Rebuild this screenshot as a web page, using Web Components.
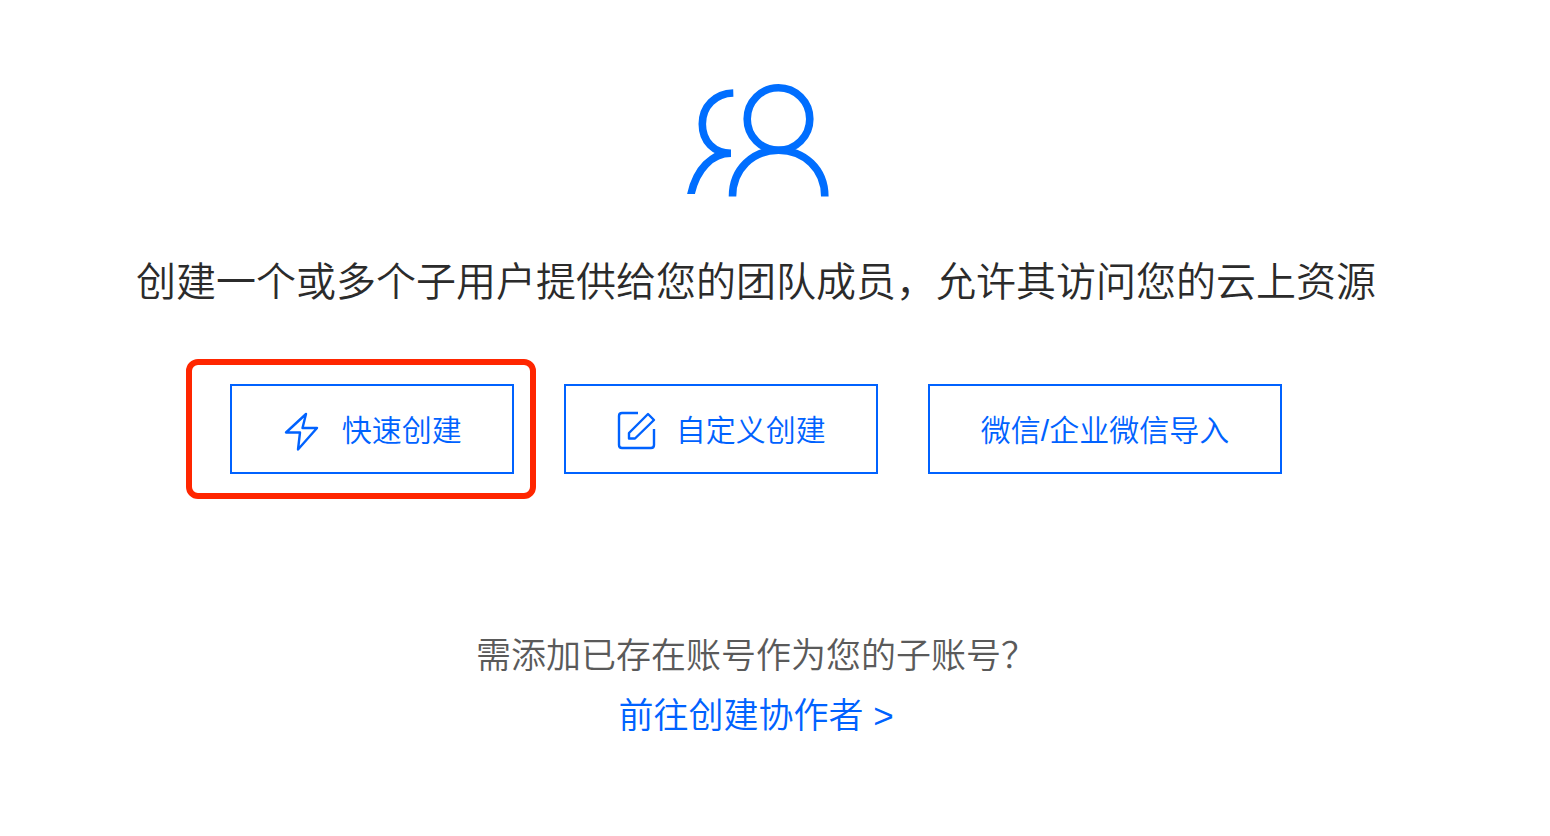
<!DOCTYPE html>
<html lang="zh-CN">
<head>
<meta charset="utf-8">
<meta name="viewport" content="width=device-width, initial-scale=1">
<title>创建子用户</title>
<style>
  body {
    margin: 0;
    background: #fff;
    color: #2b2b2b;
    font-family: "Liberation Sans", "Noto Sans CJK SC", sans-serif;
    font-weight: 350;
    --brand: #006eff;
    --action: #0062ff;
    --muted: #5a5a5a;
    --mark: #ff2600;
  }
</style>
</head>
<body>
<user-create-panel>
  <users-icon slot="icon"></users-icon>
  <span slot="title">创建一个或多个子用户提供给您的团队成员，允许其访问您的云上资源</span>
  <action-button slot="actions" icon="bolt" marked>快速创建</action-button>
  <action-button slot="actions" icon="edit">自定义创建</action-button>
  <action-button slot="actions">微信/企业微信导入</action-button>
  <collaborator-hint slot="footer">
    需添加已存在账号作为您的子账号？
    <span slot="link">前往创建协作者 &gt;</span>
  </collaborator-hint>
</user-create-panel>

<script>
  class ShadowElement extends HTMLElement {
    constructor() {
      super();
      this.attachShadow({ mode: 'open' }).innerHTML = this.template();
    }
  }

  customElements.define('user-create-panel', class extends ShadowElement {
    template() {
      return `
        <style>
          :host { display: block; }
          main {
            display: flex;
            flex-direction: column;
            align-items: center;
            padding: 80px 38px 80px 0;
          }
          h1 {
            margin: 52px 0 72px;
            font-size: 40px;
            line-height: 60px;
            font-weight: inherit;
            text-align: center;
          }
          .actions {
            display: flex;
            flex-wrap: wrap;
            justify-content: center;
            gap: 50px;
            margin-bottom: 152px;
          }
        </style>
        <main>
          <slot name="icon"></slot>
          <h1><slot name="title"></slot></h1>
          <div class="actions"><slot name="actions"></slot></div>
          <slot name="footer"></slot>
        </main>`;
    }
  });

  customElements.define('users-icon', class extends ShadowElement {
    template() {
      return `
        <style>
          :host { display: block; color: var(--brand); }
          svg { display: block; }
        </style>
        <svg width="148" height="120" viewBox="0 0 148 120" fill="none" stroke="currentColor" stroke-width="7.6" aria-hidden="true">
          <clipPath id="back"><rect width="60" height="114"/></clipPath>
          <circle cx="96.500" cy="39" r="31.300"/>
          <path d="M50.500 116.500C50.500 89 71 70.200 96.500 70.200S142.800 89 142.800 116.500"/>
          <path clip-path="url(#back)" d="M51.300 13C33 13.500 20.300 26.500 20.300 44S32 73.200 49 73.200C30 73.200 14.500 89 9 114L8 119"/>
        </svg>`;
    }
  });

  const icons = {
    bolt: '<path d="M24 3 4 21.500H18L16 38.500 35 17H20.500Z"/>',
    edit: '<path d="M22 2H6Q3 2 3 5V34Q3 37 6 37H35Q38 37 38 34V18"/><path d="M13 27.500V22L32 3 38 9 19 27.500Z"/>'
  };

  customElements.define('action-button', class extends ShadowElement {
    template() {
      return `
        <style>
          :host { display: block; position: relative; }
          button {
            display: flex;
            align-items: center;
            gap: 20px;
            height: 90px;
            box-sizing: border-box;
            padding: 4px 50px 0;
            border: 2px solid var(--action);
            background: #fff;
            color: var(--action);
            font: inherit;
            font-size: 30px;
            line-height: 40px;
            white-space: nowrap;
            cursor: pointer;
          }
          :host(:not([icon])) button { padding-inline: 51px; }
          svg { display: block; overflow: visible; }
          :host([marked])::after {
            content: "";
            position: absolute;
            inset: -25px -22px -25px -44px;
            border: 6px solid var(--mark);
            border-radius: 12px;
            pointer-events: none;
          }
        </style>
        <button type="button"><slot></slot></button>`;
    }
    connectedCallback() {
      const shape = icons[this.getAttribute('icon')];
      const button = this.shadowRoot.querySelector('button');
      if (shape && !button.querySelector('svg')) {
        button.insertAdjacentHTML('afterbegin',
          `<svg width="40" height="40" viewBox="0 0 40 40" fill="none" stroke="currentColor" stroke-width="2.400" stroke-linejoin="round" aria-hidden="true">${shape}</svg>`);
      }
    }
  });

  customElements.define('collaborator-hint', class extends ShadowElement {
    template() {
      return `
        <style>
          :host { display: block; text-align: center; font-size: 35px; line-height: 60px; }
          p { margin: 0; color: var(--muted); }
          a { color: var(--action); text-decoration: none; }
        </style>
        <p><slot></slot></p>
        <a href="#collaborator"><slot name="link"></slot></a>`;
    }
  });
</script>
</body>
</html>
